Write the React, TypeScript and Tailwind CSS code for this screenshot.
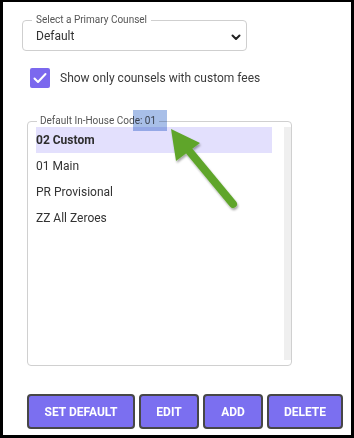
import React from "react";

export default function App() {
  const rows = ["02 Custom", "01 Main", "PR Provisional", "ZZ All Zeroes"];
  return (
    <div
      className="relative w-[354px] h-[438px] bg-white border-[3px] border-t-2 border-black overflow-hidden text-[#333]"
      style={{ fontFamily: "Roboto, 'Noto Sans', sans-serif" }}
    >
      {/* Select */}
      <fieldset className="ml-[19px] mt-3 w-[225px] border border-[#cfcfcf] rounded-[4px]">
        <legend className="ml-[9px] px-[4px] text-[10px] leading-[12px] text-[#555]">
          Select a Primary Counsel
        </legend>
        <div className="flex items-center justify-between pl-[13px] pr-[5px] h-[18px] mt-[1px] mb-[5px]">
          <span className="text-[12px] leading-4 text-[#333]">Default</span>
          <svg width="10" height="7" viewBox="0 0 10 7" className="mt-[2px]">
            <polyline points="1.5,1.5 5,5 8.5,1.5" fill="none" stroke="#222" strokeWidth="2" strokeLinecap="round" strokeLinejoin="round" />
          </svg>
        </div>
      </fieldset>

      {/* Checkbox */}
      <div className="flex items-center gap-[10px] ml-[27px] mt-[17px]">
        <div className="w-5 h-5 bg-[#7b68ee] rounded-[2px] flex items-center justify-center">
          <svg width="14" height="12" viewBox="0 0 14 12">
            <polyline points="1.5,6.5 5,10 12.5,2" fill="none" stroke="white" strokeWidth="2" strokeLinecap="round" strokeLinejoin="round" />
          </svg>
        </div>
        <span className="text-[12px] leading-4 text-[#3b3b3b]">Show only counsels with custom fees</span>
      </div>

      {/* List fieldset */}
      <fieldset className="ml-[24px] mt-[27px] w-[265px] border border-[#d0d0d0] rounded-[4px]">
        <legend className="ml-[9px] px-[3px] text-[10px] leading-[12px] text-[#555]">
          Default In-House Code: 01
        </legend>
        <div className="flex h-[233px] mb-[5px]">
          <div className="flex-1 pl-2 pr-3">
            {rows.map((r, i) => (
              <div
                key={r}
                className={
                  "h-[26px] flex items-center text-[12px] " +
                  (i === 0 ? "bg-[#e3e0fd] font-bold text-[#2e2e2e]" : "text-[#333]")
                }
              >
                {r}
              </div>
            ))}
          </div>
          <div className="w-[7px] bg-[#efefef]" />
        </div>
      </fieldset>

      {/* Buttons */}
      <div className="flex gap-1 ml-[24px] mt-[28px]">
        <button className="w-[108px] h-[35px] bg-[#7b6ff0] border-2 border-[#474747] rounded-[4px] text-white text-[12px] font-bold">SET DEFAULT</button>
        <button className="w-[60px] h-[35px] bg-[#7b6ff0] border-2 border-[#474747] rounded-[4px] text-white text-[12px] font-bold">EDIT</button>
        <button className="w-[60px] h-[35px] bg-[#7b6ff0] border-2 border-[#474747] rounded-[4px] text-white text-[12px] font-bold">ADD</button>
        <button className="w-[76px] h-[35px] bg-[#7b6ff0] border-2 border-[#474747] rounded-[4px] text-white text-[12px] font-bold">DELETE</button>
      </div>

      {/* Highlight overlay */}
      <div className="absolute left-[130px] top-[108px] w-[34px] h-[21px] bg-[#a8bfe8] mix-blend-multiply pointer-events-none" />

      {/* Green arrow */}
      <svg
        className="absolute pointer-events-none"
        style={{ left: -3, top: -2 }}
        width="354"
        height="438"
        viewBox="0 0 354 438"
      >
        <defs>
          <filter id="sh" x="-20%" y="-20%" width="150%" height="150%">
            <feDropShadow dx="1" dy="2" stdDeviation="1.2" floodColor="#000" floodOpacity="0.35" />
          </filter>
        </defs>
        <g filter="url(#sh)">
          <line x1="190" y1="152" x2="233" y2="204" stroke="#5fa52a" strokeWidth="8" strokeLinecap="round" />
          <polygon points="171,129 200,143 176,161" fill="#5fa52a" />
        </g>
      </svg>
    </div>
  );
}
